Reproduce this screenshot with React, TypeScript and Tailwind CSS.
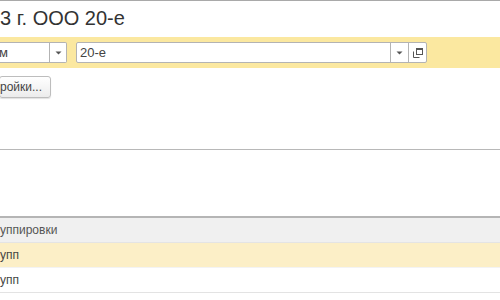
import React from "react";

function DropArrow() {
  return (
    <svg width="7" height="4" viewBox="0 0 7 4" className="block">
      <path d="M0.5 0.5h6L3.5 3.5z" fill="#555" />
    </svg>
  );
}

function OpenIcon() {
  return (
    <svg width="10" height="10" viewBox="0 0 10 10" className="block">
      <rect x="3.5" y="0.5" width="6" height="6" fill="none" stroke="#555" />
      <rect x="4" y="1" width="5" height="1" fill="#555" />
      <path d="M0.5 3.5v6h6" fill="none" stroke="#555" />
    </svg>
  );
}

export default function App() {
  return (
    <div
      className="w-[500px] h-[300px] overflow-hidden bg-white border-t border-[#a9a9a9] text-[#404040]"
      style={{ fontFamily: '"Liberation Sans", Arial, sans-serif' }}
    >
      {/* title */}
      <div className="h-[36px] pt-[6px] text-[20px] leading-[22px] text-[#333] whitespace-nowrap">
        3 г. ООО 20-е
      </div>

      {/* yellow filter band */}
      <div className="h-[31px] bg-[#fbe8a0] flex items-center">
        <div className="ml-[-2px] w-[69px] h-[21px] bg-white border border-[#b3b3b3] border-l-0 rounded-r-[2px] flex">
          <div className="flex-1 text-[13px] leading-[19px] pl-[1px] text-[#444]">м</div>
          <div className="w-[17px] border-l border-[#b3b3b3] flex items-center justify-center">
            <DropArrow />
          </div>
        </div>
        <div className="ml-[9px] w-[351px] h-[21px] bg-white border border-[#b3b3b3] rounded-[2px] flex">
          <div className="flex-1 text-[13px] leading-[19px] pl-[3px] text-[#444]">20-е</div>
          <div className="w-[18px] border-l border-[#b3b3b3] flex items-center justify-center">
            <DropArrow />
          </div>
          <div className="w-[18px] border-l border-[#b3b3b3] flex items-center justify-center">
            <OpenIcon />
          </div>
        </div>
      </div>

      {/* settings button */}
      <div className="pt-[8px] h-[81px]">
        <div className="w-[52px] h-[22px] ml-[-1px] border border-[#bdbdbd] rounded-[3px] bg-gradient-to-b from-white to-[#ececec] shadow-[0_1px_1px_rgba(0,0,0,0.12)] text-[12px] leading-[20px] text-[#444] whitespace-nowrap overflow-hidden">
          ройки...
        </div>
      </div>

      {/* separator */}
      <div className="border-t border-[#b8b8b8] h-[67px]" />

      {/* table */}
      <div className="border-t-2 border-[#b5b5b5] text-[12px]">
        <div className="h-[25px] bg-[#f0f0f0] leading-[24px] text-[#555] border-b border-[#e4e4e4] whitespace-nowrap">
          уппировки
        </div>
        <div className="h-[25px] bg-[#fcefc7] leading-[24px] text-[#444] border-b border-[#f3f3f3]">
          упп
        </div>
        <div className="h-[25px] bg-white leading-[24px] text-[#444] border-b border-[#e3e3e3]">
          упп
        </div>
      </div>
    </div>
  );
}
